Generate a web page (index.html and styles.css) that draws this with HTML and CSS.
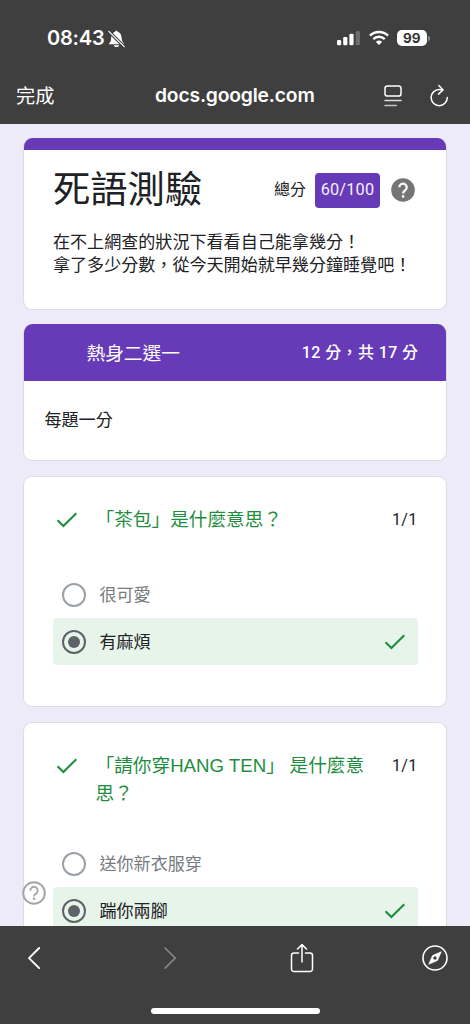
FILE: index.html
```html
<!DOCTYPE html>
<html lang="zh-Hant">
<head>
<meta charset="utf-8">
<meta name="viewport" content="width=device-width, initial-scale=1">
<title>死語測驗</title>
<link rel="stylesheet" href="styles.css">
</head>
<body>
<div class="screen">
  <header class="top">
    <div class="status">
      <span class="time">08:43</span>
      <svg class="bell" width="17" height="18" viewBox="0 0 17 18"><path d="M.8 14.200c0-1 2-2 2.200-4.200C3.200 5.800 4 2.600 7 2c.2-1.800 2.500-1.800 2.800 0 3 .6 3.900 3.700 4.100 8 .2 2.200 2.300 3.200 2.300 4.200z" fill="#fff"/><path d="M5.800 15.200h5.400c-.5 2.500-4.900 2.500-5.400 0z" fill="#fff"/><path d="M.5 1 16 16.500" stroke="#3f3f3f" stroke-width="3.200"/><path d="M.8 1.300 16.200 16.700" stroke="#fff" stroke-width="1.200" stroke-linecap="round"/></svg>
      <svg class="signal" width="24" height="16" viewBox="0 0 24 16" fill="#fff"><rect x="0" y="10" width="4.200" height="5.200" rx="1.200"/><rect x="6.200" y="7" width="4.200" height="8.200" rx="1.200"/><rect x="12.400" y="3.700" width="4.200" height="11.500" rx="1.200"/><rect x="18.700" y="1" width="4.200" height="14.200" rx="1.200" fill="#6e6e6e"/></svg>
      <svg class="wifi" width="20" height="16" viewBox="0 0 20 16" fill="none" stroke="#fff"><path d="M1 5.700a13 13 0 0 1 18 0" stroke-width="2.500"/><path d="M4.300 9.100a8.200 8.200 0 0 1 11.400 0" stroke-width="2.400"/><path d="M6.900 11.900a4.500 4.500 0 0 1 6.200 0L10 15.100z" fill="#fff" stroke="none"/></svg>
      <span class="battery">99</span><i class="nub"></i>
    </div>
    <div class="address">
      <span class="done">完成</span>
      <span class="host">docs.google.com</span>
      <svg class="reader" width="20" height="24" viewBox="0 0 20 24" fill="none" stroke="#fff" stroke-width="1.500" stroke-linecap="round"><rect x="2" y="1.900" width="16" height="10.200" rx="2.400"/><path d="M2 16.600h16" stroke="#ddd"/><path d="M2 21.600h11.300" stroke="#c4c4c4"/></svg>
      <svg class="reload" width="20" height="24" viewBox="0 0 20 24" fill="none" stroke="#fff" stroke-width="1.500" stroke-linecap="round" stroke-linejoin="round"><path d="M13.700 5.900c-1-.3-2.300-.4-3.500-.4a8.100 8.100 0 1 0 8.100 8.100"/><path d="m9.900 1.500 4.100 4.400-4.500 4.200"/></svg>
    </div>
  </header>

  <main class="page">
    <section class="card intro">
      <div class="intro-head">
        <h1>死語測驗</h1>
        <span class="total">總分</span>
        <span class="score">60/100</span>
        <svg class="help" width="24" height="24" viewBox="0 0 24 24"><circle cx="12" cy="12" r="11.800" fill="#757575"/><path d="M8.300 9.300a3.700 3.700 0 1 1 6 2.900c-1.300 1.100-2.200 1.500-2.200 3.400" fill="none" stroke="#fff" stroke-width="2.200"/><rect x="10.900" y="17.200" width="2.400" height="2.400" fill="#fff"/></svg>
      </div>
      <p class="desc">在不上網查的狀況下看看自己能拿幾分！<br>拿了多少分數，從今天開始就早幾分鐘睡覺吧！</p>
    </section>

    <section class="card section">
      <div class="section-head"><span class="section-title">熱身二選一</span><span class="section-score">12 分，共 17 分</span></div>
      <p class="note">每題一分</p>
    </section>

    <section class="card question">
      <div class="q-head">
        <svg class="check" width="22" height="18" viewBox="0 0 22 18"><path d="m1.500 9.300 5.900 5.700L20.300 2.200" fill="none" stroke="#1e8e3e" stroke-width="2.100"/></svg>
        <h2>「茶包」是什麼意思？</h2><span class="points">1/1</span>
      </div>
      <div class="option"><i class="radio"></i><span class="label">很可愛</span></div>
      <div class="option chosen"><i class="radio"></i><span class="label">有麻煩</span><svg class="check" width="22" height="18" viewBox="0 0 22 18"><path d="m1.500 9.300 5.900 5.700L20.300 2.200" fill="none" stroke="#1e8e3e" stroke-width="2.100"/></svg></div>
    </section>

    <section class="card question long">
      <div class="q-head">
        <svg class="check" width="22" height="18" viewBox="0 0 22 18"><path d="m1.500 9.300 5.900 5.700L20.300 2.200" fill="none" stroke="#1e8e3e" stroke-width="2.100"/></svg>
        <h2>「請你穿<span class="latin">HANG TEN</span>」 是什麼意<br>思？</h2><span class="points">1/1</span>
      </div>
      <div class="option"><i class="radio"></i><span class="label">送你新衣服穿</span></div>
      <div class="option chosen"><i class="radio"></i><span class="label">踹你兩腳</span><svg class="check" width="22" height="18" viewBox="0 0 22 18"><path d="m1.500 9.300 5.900 5.700L20.300 2.200" fill="none" stroke="#1e8e3e" stroke-width="2.100"/></svg></div>
    </section>
    <svg class="float-help" width="24" height="24" viewBox="0 0 24 24"><circle cx="12" cy="12" r="10.800" fill="none" stroke="#a5a5a8" stroke-width="2"/><path d="M8.300 9.700a3.700 3.700 0 1 1 6 2.700c-1.300 1-2.200 1.400-2.200 3" fill="none" stroke="#a5a5a8" stroke-width="1.900"/><rect x="11" y="16.700" width="2.200" height="2.200" fill="#a5a5a8"/></svg>
  </main>

  <footer class="toolbar">
    <div class="tools">
      <svg width="14" height="24" viewBox="0 0 14 24"><path d="M12.200 2 2 12.100l10.200 10" fill="none" stroke="#fff" stroke-width="1.900" stroke-linecap="round" stroke-linejoin="round"/></svg>
      <svg class="forward" width="14" height="24" viewBox="0 0 14 24"><path d="m2 2 10.200 10.100L2 22.100" fill="none" stroke="#858585" stroke-width="1.700" stroke-linecap="round" stroke-linejoin="round"/></svg>
      <svg class="share" width="24" height="30" viewBox="0 0 24 30" fill="none" stroke="#fff" stroke-width="1.500" stroke-linecap="round" stroke-linejoin="round"><path d="M8.500 9.900H4A2.500 2.500 0 0 0 1.500 12.400V26A2.500 2.500 0 0 0 4 28.500h16a2.500 2.500 0 0 0 2.500-2.500V12.400A2.500 2.500 0 0 0 20 9.900h-4.500M12 19V1.800M7.500 6 12 1.600 16.500 6"/></svg>
      <svg class="compass" width="26" height="26" viewBox="0 0 26 26"><circle cx="13" cy="13" r="12" fill="none" stroke="#fff" stroke-width="1.600"/><path d="M19.300 6.700 15.500 15.500 6.700 19.300 10.500 10.500z" fill="#fff" stroke="#fff" stroke-linejoin="round" stroke-width=".6"/><circle cx="13" cy="13" r="1.700" fill="#3f3f3f"/></svg>
    </div>
    <div class="home"></div>
  </footer>
</div>
</body>
</html>
```
FILE: styles.css
```css
* { box-sizing: border-box; }
body { margin: 0; font-family: Roboto, "Noto Sans CJK TC", sans-serif; color: #202124; }
h1, h2, p { margin: 0; font-weight: 400; }
svg { display: block; flex: none; }
.screen { width: 470px; height: 1024px; display: flex; flex-direction: column; overflow: hidden; }

.top { height: 124px; flex: none; background: #3f3f3f; color: #fff; }
.status { height: 74px; padding: 24px 0 0 47px; display: flex; align-items: flex-start; }
.time { width: 60px; font: 600 20px/29px Inter, sans-serif; letter-spacing: -.2px; white-space: nowrap; }
.bell { margin: 6px 0 0 1px; }
.signal { margin: 6px 0 0 212px; }
.wifi { margin: 6px 0 0 8px; }
.battery { width: 29.500px; height: 16px; margin: 6px 0 0 8px; border-radius: 5px; background: #fff; color: #333; font: 700 13.500px/16px Inter, sans-serif; text-align: center; }
.nub { width: 2px; height: 5px; margin: 11.500px 0 0 1px; border-radius: 0 2px 2px 0; background: #888; }
.address { height: 44px; display: flex; align-items: center; padding-left: 16px; }
.done { width: 139px; padding-top: 2px; font-size: 19.200px; line-height: 28px; }
.host { width: 160px; padding-bottom: 2px; font: 600 19.300px/28px Inter, sans-serif; letter-spacing: -.18px; white-space: nowrap; }
.reader { margin-left: 68px; }
.reload { margin-left: 26px; }

.page { position: relative; flex: 1; min-height: 0; padding: 14px 23px 0; background: #eeebf8; display: flex; flex-direction: column; gap: 15px; overflow: hidden; }
.card { flex: none; background: #fff; border: 1px solid #dcdce5; border-radius: 9px; overflow: hidden; }
.intro { height: 172px; margin-bottom: -1px; padding: 0 29px; position: relative; border-top: 0; }
.intro::before { content: ""; display: block; height: 12px; margin: 0 -30px 16px; background: #673ab7; }
.intro-head { height: 48px; display: flex; align-items: center; }
h1 { width: 221px; font-size: 37.300px; line-height: 48px; white-space: nowrap; }
.total { width: 41px; font-size: 16px; line-height: 24px; }
.score { width: 65px; height: 35px; border-radius: 4px; background: #673ab7; color: #f4effb; font-size: 16.300px; line-height: 34px; letter-spacing: .2px; text-align: center; }
.help { margin-left: 11px; }
.desc { margin-top: 16.500px; font-size: 17.070px; line-height: 23.500px; white-space: nowrap; }
.section { height: 137px; border-top: 0; }
.section-head { height: 57px; margin: 0 -1px; padding: 0 28.500px 3px 63.500px; background: #673ab7; color: #fff; display: flex; align-items: center; justify-content: space-between; }
.section-title { font-size: 18.700px; }
.section-score { padding-bottom: 1px; font-size: 16px; font-weight: 500; letter-spacing: .4px; }
.note { padding: 27px 20.500px; font-size: 17.070px; line-height: 24px; }
.question { height: 231px; padding: 29px 28.500px 0; }
.question.long { height: 270px; }
.q-head { height: 64px; display: flex; align-items: flex-start; margin-bottom: 1px; }
.long .q-head { height: 87px; }
.q-head .check { margin: 5px 20px 0 3px; }
.question h2 { width: 297px; margin-left: -2px; color: #1e8e3e; font-size: 18.670px; line-height: 28px; white-space: nowrap; }
.latin { font-family: "Liberation Sans", Arial, sans-serif; }
.points { font-size: 16px; line-height: 27px; letter-spacing: .3px; }
.option { height: 47px; display: flex; align-items: center; padding: 0 12px 0 9px; border-radius: 4px; color: #777a7e; font-size: 17.070px; }
.label { padding-bottom: 2px; }
.option .check { margin-left: auto; }
.radio { position: relative; width: 24px; height: 24px; margin-right: 14px; border: 2.500px solid #9aa0a6; border-radius: 50%; }
.chosen { background: #e6f4ea; color: #202124; }
.chosen .radio { border-color: #5f6368; }
.chosen .radio::after { content: ""; position: absolute; inset: 4px; border-radius: 50%; background: #5f6368; }
.float-help { position: absolute; left: 22px; top: 757px; }

.toolbar { height: 98px; flex: none; background: #3f3f3f; }
.tools { height: 64px; padding-left: 27px; display: flex; align-items: center; }
.forward { margin-left: 122px; }
.share { margin-left: 113px; }
.compass { margin-left: 108px; }
.home { width: 169px; height: 6px; margin: 18px auto 0; border-radius: 3px; background: #fff; }
```
